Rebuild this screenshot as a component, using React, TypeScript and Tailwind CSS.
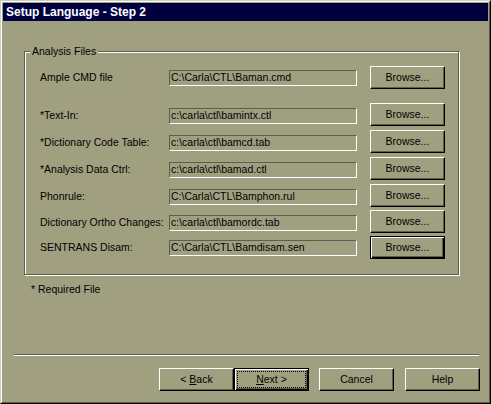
const rows = [
  { label: "Ample CMD file", value: "C:\\Carla\\CTL\\Baman.cmd", mt: "mt-0", tb: "mt-[4px]" },
  { label: "*Text-In:", value: "c:\\carla\\ctl\\bamintx.ctl", mt: "mt-[14px]", tb: "mt-[5px]" },
  { label: "*Dictionary Code Table:", value: "c:\\carla\\ctl\\bamcd.tab", mt: "mt-[4px]", tb: "mt-[5px]" },
  { label: "*Analysis Data Ctrl:", value: "c:\\carla\\ctl\\bamad.ctl", mt: "mt-[4px]", tb: "mt-[5px]" },
  { label: "Phonrule:", value: "C:\\Carla\\CTL\\Bamphon.rul", mt: "mt-[4px]", tb: "mt-[5px]" },
  { label: "Dictionary Ortho Changes:", value: "c:\\carla\\ctl\\bamordc.tab", mt: "mt-[3px]", tb: "mt-[5px]" },
  { label: "SENTRANS Disam:", value: "C:\\Carla\\CTL\\Bamdisam.sen", mt: "mt-[3px]", tb: "mt-[4px]", isDefault: true },
];

const btn =
  "flex h-[23px] w-[75px] shrink-0 items-center justify-center border border-t-white border-l-white border-r-black border-b-black shadow-[inset_-1px_-1px_0_#5f5f48] bg-[#a0a080] text-[10.5px] text-black";
const defBtn =
  "flex h-[23px] w-[75px] shrink-0 items-center justify-center border border-black shadow-[inset_1px_1px_0_#fff,inset_-1px_-1px_0_#000,inset_-2px_-2px_0_#5f5f48] bg-[#a0a080] text-[10.5px] text-black";

export default function App() {
  return (
    <div
      className="h-[404px] w-[491px] border border-t-[#cfcfb4] border-l-[#cfcfb4] border-r-black border-b-black bg-[#a0a080]"
      style={{ fontFamily: '"Liberation Sans", Arial, sans-serif' }}
    >
      <div className="flex h-full flex-col border border-t-white border-l-white border-r-[#5f5f48] border-b-[#5f5f48] p-px">
        {/* title bar */}
        <div className="flex h-[18px] items-center bg-[#000040] pl-[3px] text-[12px] font-bold text-white">
          Setup Language - Step 2
        </div>

        {/* group box */}
        <div className="relative ml-[21px] mt-[30px] h-[224px] w-[435px] border border-[#5f5f48] shadow-[inset_1px_1px_0_#fff,1px_1px_0_#fff]">
          <span className="absolute left-[5px] top-[-8px] bg-[#a0a080] px-[2px] text-[10.5px] leading-[14px] text-black">
            Analysis Files
          </span>
          <div className="flex flex-col pl-[15px] pt-[14px]">
            {rows.map((r) => (
              <div key={r.label} className={`flex h-[23px] items-start ${r.mt}`}>
                <div className={`flex h-[16px] items-center ${r.tb}`}>
                  <div className="w-[129px] whitespace-nowrap text-[10.5px] text-black">{r.label}</div>
                  <div className="flex h-[16px] w-[188px] items-center overflow-hidden whitespace-nowrap border border-t-[#5f5f48] border-l-[#5f5f48] border-r-white border-b-white pl-px text-[10.5px] text-black">
                    {r.value}
                  </div>
                </div>
                <button className={`ml-[13px] ${r.isDefault ? defBtn : btn}`}>Browse...</button>
              </div>
            ))}
          </div>
        </div>

        <div className="ml-[28px] mt-[8px] text-[10.5px] leading-[13px] text-black">* Required File</div>

        {/* separator and buttons */}
        <div className="mt-auto">
          <div className="ml-[11px] mr-[9px] h-[2px] border-t border-b border-t-[#5f5f48] border-b-white" />
          <div className="mb-[10px] mr-[8px] mt-[12px] flex justify-end">
            <button className={btn}>
              &lt;&nbsp;<span className="underline">B</span>ack
            </button>
            <button className={`${defBtn} p-[2px]`}>
              <span className="flex h-full w-full items-center justify-center border border-dotted border-black">
                <span className="underline">N</span>ext&nbsp;&gt;
              </span>
            </button>
            <button className={`ml-[10px] ${btn}`}>Cancel</button>
            <button className={`ml-[11px] ${btn}`}>Help</button>
          </div>
        </div>
      </div>
    </div>
  );
}
